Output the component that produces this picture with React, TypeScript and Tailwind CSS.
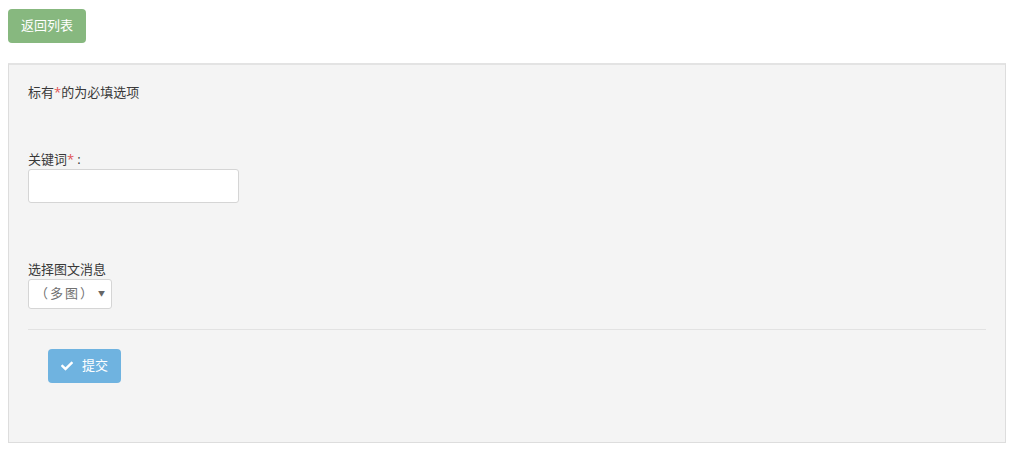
import { FaCheck } from "react-icons/fa";

const font = { fontFamily: '"Open Sans", "Noto Sans CJK SC", sans-serif' };

export default function App() {
  return (
    <div className="min-h-[452px] bg-white text-[13px] text-[#393939]" style={font}>
      <div className="px-2 pt-[9px]">
        <button className="h-[34px] w-[78px] rounded-[4px] bg-[#87b87f] text-[13px] text-white">
          返回列表
        </button>
      </div>

      <div className="mx-2 mt-5 h-[380px] border border-t-2 border-[#dddddd] border-t-[#e3e3e3] bg-[#f4f4f4] pl-[19px] pr-[19px] pt-[17px]">
        <p className="leading-5">
          标有<span className="text-[#e05555]">*</span>的为必填选项
        </p>

        <div className="mt-[48px]">
          <label className="block leading-[19px]">
            关键词<span className="text-[#e05555]">*</span>
            <span className="pl-[3px] pr-[3px]">:</span>
          </label>
          <input
            type="text"
            className="block h-[34px] w-[211px] rounded-[3px] border border-[#d5d5d5] bg-white px-2 outline-none"
          />
        </div>

        <div className="mt-[57px]">
          <label className="block leading-[19px]">选择图文消息</label>
          <div className="flex h-[30px] w-[84px] items-center justify-between rounded-[3px] border border-[#d5d5d5] bg-white pl-[6px] pr-[6px] text-[#707070]">
            <span className="tracking-[2px]">（多图）</span>
            <span className="text-[7px] text-[#666]">▼</span>
          </div>
        </div>

        <div className="mt-5 h-px bg-[#e2e2e2]" />

        <div className="mt-[19px] pl-5">
          <button className="flex h-[34px] w-[73px] items-center justify-center gap-[9px] rounded-[4px] bg-[#6fb3e0] text-[13px] text-white">
            <FaCheck className="h-[12px] w-[12px]" />
            提交
          </button>
        </div>
      </div>
    </div>
  );
}
